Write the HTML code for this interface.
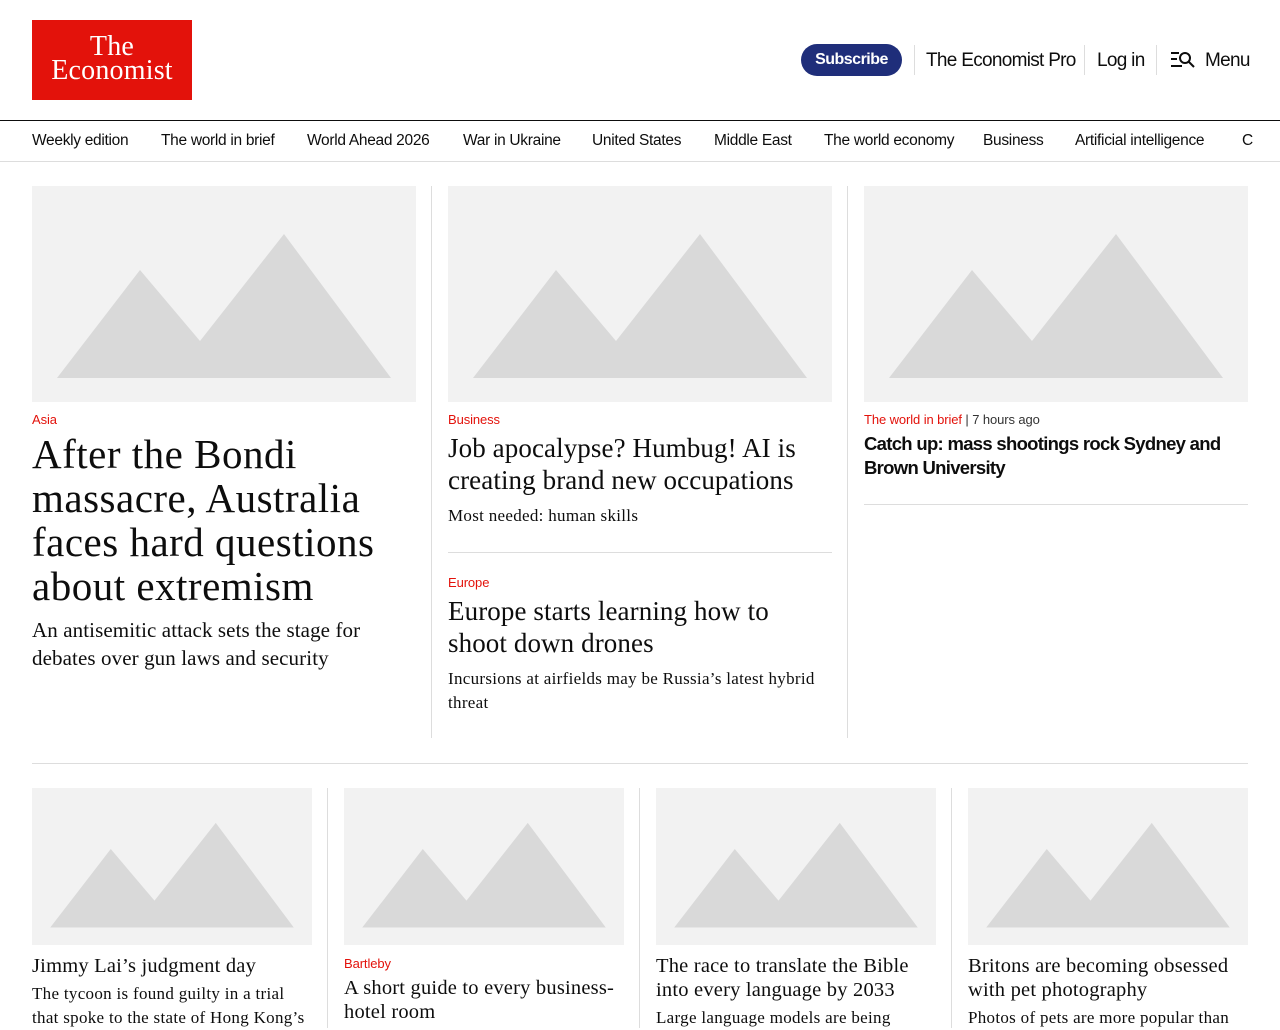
<!DOCTYPE html>
<html><head><meta charset="utf-8"><style>
*{margin:0;padding:0;box-sizing:border-box}
body{width:1280px;height:1024px;overflow:hidden;background:#fff;color:#0d0d0d;font-family:"Liberation Sans",sans-serif;position:relative}
.a{position:absolute}
.logo{left:32px;top:20px;width:160px;height:80px;background:#e3120b;color:#fff;font-family:"Liberation Serif",serif;font-size:28px;line-height:24px;text-align:center;padding-top:15px;letter-spacing:0.2px}
.hdr{font-size:19px;letter-spacing:-0.7px;top:50px;color:#0d0d0d}
.sub{left:801px;top:44px;width:101px;height:32px;border-radius:16px;background:#1f2e7a;color:#fff;font-weight:bold;font-size:16px;text-align:center;line-height:32px;letter-spacing:-0.5px}
.vr{width:1px;height:30px;background:#ddd;top:45px}
.nav{top:120px;left:0;width:1280px;height:42px;border-top:1.5px solid #0d0d0d;border-bottom:1px solid #ddd}
.nav span{position:absolute;top:11px;font-size:15.5px;letter-spacing:-0.3px;white-space:nowrap}
.img{background:#f2f2f2}
.img svg{display:block;width:100%;height:100%}
.red{color:#e3120b;font-size:13px;letter-spacing:-0.1px}
.serif{font-family:"Liberation Serif",serif}
.col{border-left:1px solid #ddd}
</style></head><body>
<div class="a logo">The<br>Economist</div>
<div class="a sub">Subscribe</div>
<div class="a vr" style="left:914px"></div>
<div class="a hdr" style="left:926px">The Economist Pro</div>
<div class="a vr" style="left:1084px"></div>
<div class="a hdr" style="left:1097px">Log in</div>
<div class="a vr" style="left:1156px"></div>
<svg class="a" style="left:1170px;top:50px" width="28" height="20" viewBox="0 0 28 20" fill="none" stroke="#0d0d0d" stroke-width="2"><path d="M1 3h8M1 9h6M1 16h11"/><circle cx="15" cy="8" r="5"/><path d="M19 12l5 5"/></svg>
<div class="a hdr" style="left:1205px">Menu</div>
<div class="a nav">
<span style="left:32px">Weekly edition</span><span style="left:161px">The world in brief</span><span style="left:307px">World Ahead 2026</span><span style="left:463px">War in Ukraine</span><span style="left:592px">United States</span><span style="left:714px">Middle East</span><span style="left:824px">The world economy</span><span style="left:983px">Business</span><span style="left:1075px">Artificial intelligence</span><span style="left:1242px">C</span>
</div>

<div class="a col" style="left:431px;top:186px;height:552px"></div>
<div class="a col" style="left:847px;top:186px;height:552px"></div>
<div class="a img" style="left:32px;top:186px;width:384px;height:216px"><svg viewBox="0 0 384 216"><polygon points="25,192 108,84 168,155 252,48 359,192" fill="#d9d9d9"/></svg></div>
<div class="a img" style="left:448px;top:186px;width:384px;height:216px"><svg viewBox="0 0 384 216"><polygon points="25,192 108,84 168,155 252,48 359,192" fill="#d9d9d9"/></svg></div>
<div class="a img" style="left:864px;top:186px;width:384px;height:216px"><svg viewBox="0 0 384 216"><polygon points="25,192 108,84 168,155 252,48 359,192" fill="#d9d9d9"/></svg></div>

<div class="a red" style="left:32px;top:412px">Asia</div>
<div class="a serif" style="left:32px;top:432px;width:384px;font-size:41px;line-height:44px;letter-spacing:0.5px">After the Bondi massacre, Australia faces hard questions about extremism</div>
<div class="a serif" style="left:32px;top:616px;width:384px;font-size:21px;line-height:28px;letter-spacing:0.1px">An antisemitic attack sets the stage for debates over gun laws and security</div>

<div class="a red" style="left:448px;top:412px">Business</div>
<div class="a serif" style="left:448px;top:432px;width:370px;font-size:27px;line-height:32px;letter-spacing:0.1px">Job apocalypse? Humbug! AI is creating brand new occupations</div>
<div class="a serif" style="left:448px;top:504px;font-size:17px;line-height:24px;letter-spacing:0.3px">Most needed: human skills</div>
<div class="a" style="left:448px;top:552px;width:384px;height:1px;background:#ddd"></div>
<div class="a red" style="left:448px;top:575px">Europe</div>
<div class="a serif" style="left:448px;top:595px;width:370px;font-size:27px;line-height:32px;letter-spacing:0.1px">Europe starts learning how to shoot down drones</div>
<div class="a serif" style="left:448px;top:667px;width:384px;font-size:17px;line-height:24px;letter-spacing:0.3px">Incursions at airfields may be Russia’s latest hybrid threat</div>

<div class="a" style="left:864px;top:412px;font-size:13px;letter-spacing:-0.1px;color:#333"><span style="color:#e3120b">The world in brief</span> | 7 hours ago</div>
<div class="a" style="left:864px;top:432px;width:384px;font-size:18.5px;line-height:24px;font-weight:bold;letter-spacing:-0.7px">Catch up: mass shootings rock Sydney and Brown University</div>
<div class="a" style="left:864px;top:504px;width:384px;height:1px;background:#ddd"></div>

<div class="a" style="left:32px;top:763px;width:1216px;height:1px;background:#ddd"></div>

<div class="a col" style="left:327px;top:788px;height:240px"></div>
<div class="a col" style="left:639px;top:788px;height:240px"></div>
<div class="a col" style="left:951px;top:788px;height:240px"></div>
<div class="a img" style="left:32px;top:788px;width:280px;height:157px"><svg viewBox="0 0 384 216" preserveAspectRatio="none"><polygon points="25,192 108,84 168,155 252,48 359,192" fill="#d9d9d9"/></svg></div>
<div class="a img" style="left:344px;top:788px;width:280px;height:157px"><svg viewBox="0 0 384 216" preserveAspectRatio="none"><polygon points="25,192 108,84 168,155 252,48 359,192" fill="#d9d9d9"/></svg></div>
<div class="a img" style="left:656px;top:788px;width:280px;height:157px"><svg viewBox="0 0 384 216" preserveAspectRatio="none"><polygon points="25,192 108,84 168,155 252,48 359,192" fill="#d9d9d9"/></svg></div>
<div class="a img" style="left:968px;top:788px;width:280px;height:157px"><svg viewBox="0 0 384 216" preserveAspectRatio="none"><polygon points="25,192 108,84 168,155 252,48 359,192" fill="#d9d9d9"/></svg></div>

<div class="a serif" style="left:32px;top:954px;width:285px;font-size:20.5px;line-height:24px;letter-spacing:0.2px">Jimmy Lai’s judgment day</div>
<div class="a serif" style="left:32px;top:982px;width:280px;font-size:17px;line-height:24px;letter-spacing:0.3px">The tycoon is found guilty in a trial that spoke to the state of Hong Kong’s</div>

<div class="a red" style="left:344px;top:956px">Bartleby</div>
<div class="a serif" style="left:344px;top:976px;width:285px;font-size:20.5px;line-height:24px;letter-spacing:0.2px">A short guide to every business-hotel room</div>

<div class="a serif" style="left:656px;top:954px;width:280px;font-size:20.5px;line-height:24px;letter-spacing:0.2px">The race to translate the Bible into every language by 2033</div>
<div class="a serif" style="left:656px;top:1006px;width:285px;font-size:17px;line-height:24px;letter-spacing:0.3px">Large language models are being</div>

<div class="a serif" style="left:968px;top:954px;width:285px;font-size:20.5px;line-height:24px;letter-spacing:0.2px">Britons are becoming obsessed with pet photography</div>
<div class="a serif" style="left:968px;top:1006px;width:285px;font-size:17px;line-height:24px;letter-spacing:0.3px">Photos of pets are more popular than</div>
</body></html>
